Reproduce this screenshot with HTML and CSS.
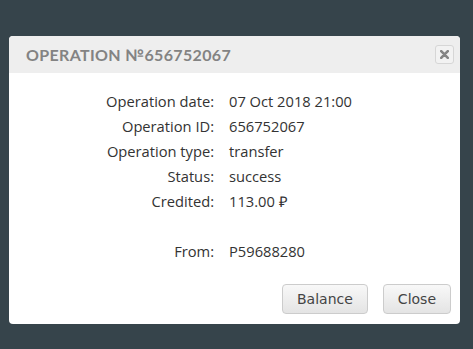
FILE: index.html
```html
<!DOCTYPE html>
<html>
<head>
	<title>Operation</title>
	<link rel="stylesheet" href="styles.css">
</head>
<body>
	<div class="modal">
		<div class="modal-header">
			<span class="modal-title">Operation №656752067</span>
			<button type="button" class="close-x">
				<svg width="9" height="9" viewBox="0 0 9 9"><path d="M1.2 1.2 L7.8 7.8 M7.8 1.2 L1.2 7.8" stroke="#858585" stroke-width="2.6" stroke-linecap="round"/></svg>
			</button>
		</div>
		<div class="modal-body">
			<div class="info">
				<span class="label">Operation date:</span><span class="value">07 Oct 2018 21:00</span>
				<span class="label">Operation ID:</span><span class="value">656752067</span>
				<span class="label">Operation type:</span><span class="value">transfer</span>
				<span class="label">Status:</span><span class="value">success</span>
				<span class="label">Credited:</span><span class="value">113.00 &#8381;</span>
				<span class="label"></span><span class="value"></span>
				<span class="label">From:</span><span class="value">P59688280</span>
			</div>
		</div>
		<div class="modal-footer">
			<button type="button" class="btn">Balance</button>
			<button type="button" class="btn">Close</button>
		</div>
	</div>
</body>
</html>
```

FILE: styles.css
```css
html, body {
	margin: 0;
	height: 100%;
}
body {
	background-color: #36444b;
	font-family: "Open Sans", sans-serif;
	padding: 36px 13px 0 9px;
	box-sizing: border-box;
}
.modal {
	background-color: #fff;
	border-radius: 4px;
	height: 288px;
	display: flex;
	flex-direction: column;
	overflow: hidden;
}
.modal-header {
	background-color: #eeeeee;
	height: 37px;
	display: flex;
	align-items: center;
	justify-content: space-between;
	padding: 0 6px 0 17px;
}
.modal-title {
	text-transform: uppercase;
	color: #838383;
	font-family: "Lato", sans-serif;
	font-size: 16px;
	letter-spacing: 0.35px;
	font-weight: bold;
}
.close-x {
	width: 19px;
	height: 19px;
	border: 1px solid #d6d6d6;
	border-radius: 3px;
	background-color: #f2f2f2;
	padding: 0;
	display: flex;
	align-items: center;
	justify-content: center;
}
.modal-body {
	flex: 1;
	padding-top: 16px;
}
.info {
	display: grid;
	grid-template-columns: 205px auto;
	grid-auto-rows: 25px;
	column-gap: 15px;
	font-size: 14.7px;
	color: #333;
	line-height: 25px;
}
.label {
	text-align: right;
}
.modal-footer {
	display: flex;
	justify-content: flex-end;
	gap: 15px;
	padding: 0 9px 10px 0;
}
.btn {
	font-family: "DejaVu Sans", sans-serif;
	font-size: 14px;
	color: #444;
	height: 30px;
	padding: 0 14px;
	border: 1px solid #cccccc;
	border-radius: 4px;
	background: linear-gradient(#f8f8f8, #e4e4e4);
}
```
